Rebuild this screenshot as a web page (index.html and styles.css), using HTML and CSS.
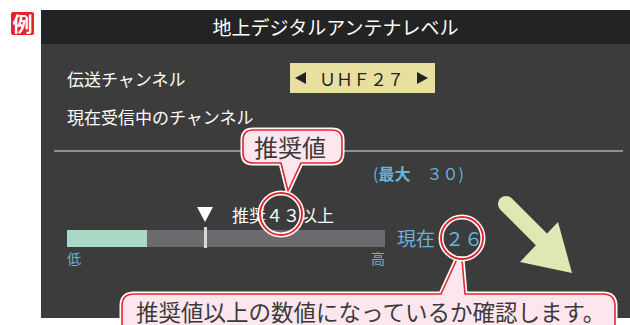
FILE: index.html
```html
<!DOCTYPE html>
<html lang="ja">
<head>
  <meta charset="UTF-8" />
  <meta name="viewport" content="width=device-width, initial-scale=1.0" />
  <title>地上デジタルアンテナレベル</title>
  <link rel="stylesheet" href="styles.css">
</head>
<body>
  <div class="page">
    <div class="badge">例</div>

    <div class="screen">
      <div class="title">地上デジタルアンテナレベル</div>

      <div class="body">
        <div class="row">
          <span class="label">伝送チャンネル</span>
          <span class="channel">
            <svg class="tri" width="11" height="12" viewBox="0 0 11 12"><polygon points="0,6 11,0 11,12" /></svg>
            <span class="ch-name">ＵＨＦ２７</span>
            <svg class="tri" width="11" height="12" viewBox="0 0 11 12"><polygon points="11,6 0,0 0,12" /></svg>
          </span>
        </div>
        <div class="row">
          <span class="label">現在受信中のチャンネル</span>
        </div>

        <div class="rule"></div>

        <div class="max">(<b>最大</b>　３０)</div>

        <div class="meter">
          <div class="gauge">
            <div class="recommend">
              <svg width="16" height="15" viewBox="0 0 16 15"><polygon points="0,0 16,0 8,15" fill="#fff" /></svg>
              <span>推奨４３以上</span>
            </div>
            <div class="bar">
              <div class="fill" style="width: 80px"></div>
              <div class="marker"></div>
            </div>
            <div class="scale"><span>低</span><span>高</span></div>
          </div>
          <div class="now">現在<span class="now-val">２６</span></div>
        </div>
      </div>
    </div>

    <!-- callouts drawn over the screen -->
    <svg class="notes" width="630" height="325" viewBox="0 0 630 325">
      <path class="edge" d="M253,130 H332 Q342,130 342,140 V153 Q342,163 332,163 H301 L288,191 L281,163 H253 Q243,163 243,153 V140 Q243,130 253,130 Z" />
      <path class="bubble" d="M253,130 H332 Q342,130 342,140 V153 Q342,163 332,163 H301 L288,191 L281,163 H253 Q243,163 243,153 V140 Q243,130 253,130 Z" />
      <text class="note-text" x="254" y="157">推奨値</text>

      <circle class="edge" cx="281" cy="214" r="21" />
      <circle class="ring" cx="281" cy="214" r="21" />

      <path class="edge" d="M134,294 H441 L457,259 L462,259 L465,294 H603 Q615,294 615,306 V345 H122 V306 Q122,294 134,294 Z" />
      <path class="bubble" d="M134,294 H441 L457,259 L462,259 L465,294 H603 Q615,294 615,306 V345 H122 V306 Q122,294 134,294 Z" />
      <text class="note-text big" x="136" y="321">推奨値以上の数値になっているか確認します。</text>

      <circle class="edge" cx="462" cy="238" r="21" />
      <circle class="ring" cx="462" cy="238" r="21" />

      <line class="arrow" x1="506" y1="204" x2="542" y2="240" />
      <polygon class="arrow-head" points="520,262 572,273 558,222" />
    </svg>
  </div>
</body>
</html>
```

FILE: styles.css
```css
body {
  margin: 0;
  background: #fff;
  font-family: "Noto Sans CJK JP", "Noto Sans", sans-serif;
}
.page {
  position: relative;
  width: 630px;
  height: 325px;
  display: flex;
  align-items: flex-start;
  padding-top: 10px;
  box-sizing: border-box;
  overflow: hidden;
}
.badge {
  width: 23px;
  height: 23px;
  margin: 2px 7px 0 11px;
  background: #e3232b;
  border-radius: 2px;
  color: #fff;
  font-size: 20px;
  font-weight: bold;
  line-height: 23px;
  text-align: center;
}
.screen {
  width: 589px;
  height: 308px;
  background: #3c3c3c;
}
.title {
  height: 34px;
  line-height: 34px;
  background: #232323;
  color: #fff;
  font-size: 19px;
  text-align: center;
}
.body {
  padding: 19px 0 0 26px;
  color: #fff;
}
.row {
  height: 30px;
  display: flex;
  align-items: center;
}
.row + .row {
  margin-top: 8px;
}
.label {
  width: 223px;
  font-size: 17px;
}
.channel {
  width: 145px;
  height: 30px;
  box-sizing: border-box;
  padding: 0 7px 0 5px;
  display: flex;
  align-items: center;
  justify-content: space-between;
  background: #e8e0a0;
  color: #222;
  font-size: 17px;
}
.tri polygon {
  fill: #222;
}
.rule {
  margin: 19px 0 0 -13px;
  width: 569px;
  height: 2px;
  background: #8f8f8f;
}
.max {
  margin: 11px 0 0 306px;
  line-height: 20px;
  font-size: 16px;
  color: #67b3dd;
}
.max b {
  font-weight: bold;
}
.meter {
  display: flex;
  margin-top: 21px;
}
.gauge {
  width: 318px;
}
.recommend {
  height: 20px;
  display: flex;
  align-items: center;
  padding-left: 130px;
  gap: 19px;
  font-size: 17px;
}
.bar {
  position: relative;
  height: 17px;
  margin-top: 6px;
  background: #6b6b6f;
}
.fill {
  height: 100%;
  background: #a9d9c5;
}
.marker {
  position: absolute;
  left: 137px;
  top: -3px;
  width: 3px;
  height: 21px;
  background: #d8d8d8;
}
.scale {
  display: flex;
  justify-content: space-between;
  margin-top: 3px;
  line-height: 16px;
  font-size: 14px;
  color: #67b3dd;
}
.now {
  margin: 24px 0 0 12px;
  line-height: 20px;
  font-size: 19px;
  color: #67b3dd;
}
.now-val {
  margin-left: 10px;
}
.notes {
  position: absolute;
  left: 0;
  top: 0;
  pointer-events: none;
}
.edge {
  fill: none;
  stroke: #fff;
  stroke-width: 5;
  stroke-linejoin: round;
}
.bubble {
  fill: #fde6ee;
  stroke: #e52630;
  stroke-width: 1.6;
  stroke-linejoin: round;
}
.ring {
  fill: none;
  stroke: #e52630;
  stroke-width: 2;
}
.note-text {
  font-family: "Noto Sans CJK JP", sans-serif;
  font-size: 24px;
  fill: #3a3a3a;
}
.note-text.big {
  font-size: 22.5px;
}
.arrow {
  stroke: #dfe8b4;
  stroke-width: 16;
  stroke-linecap: round;
}
.arrow-head {
  fill: #dfe8b4;
}
```
